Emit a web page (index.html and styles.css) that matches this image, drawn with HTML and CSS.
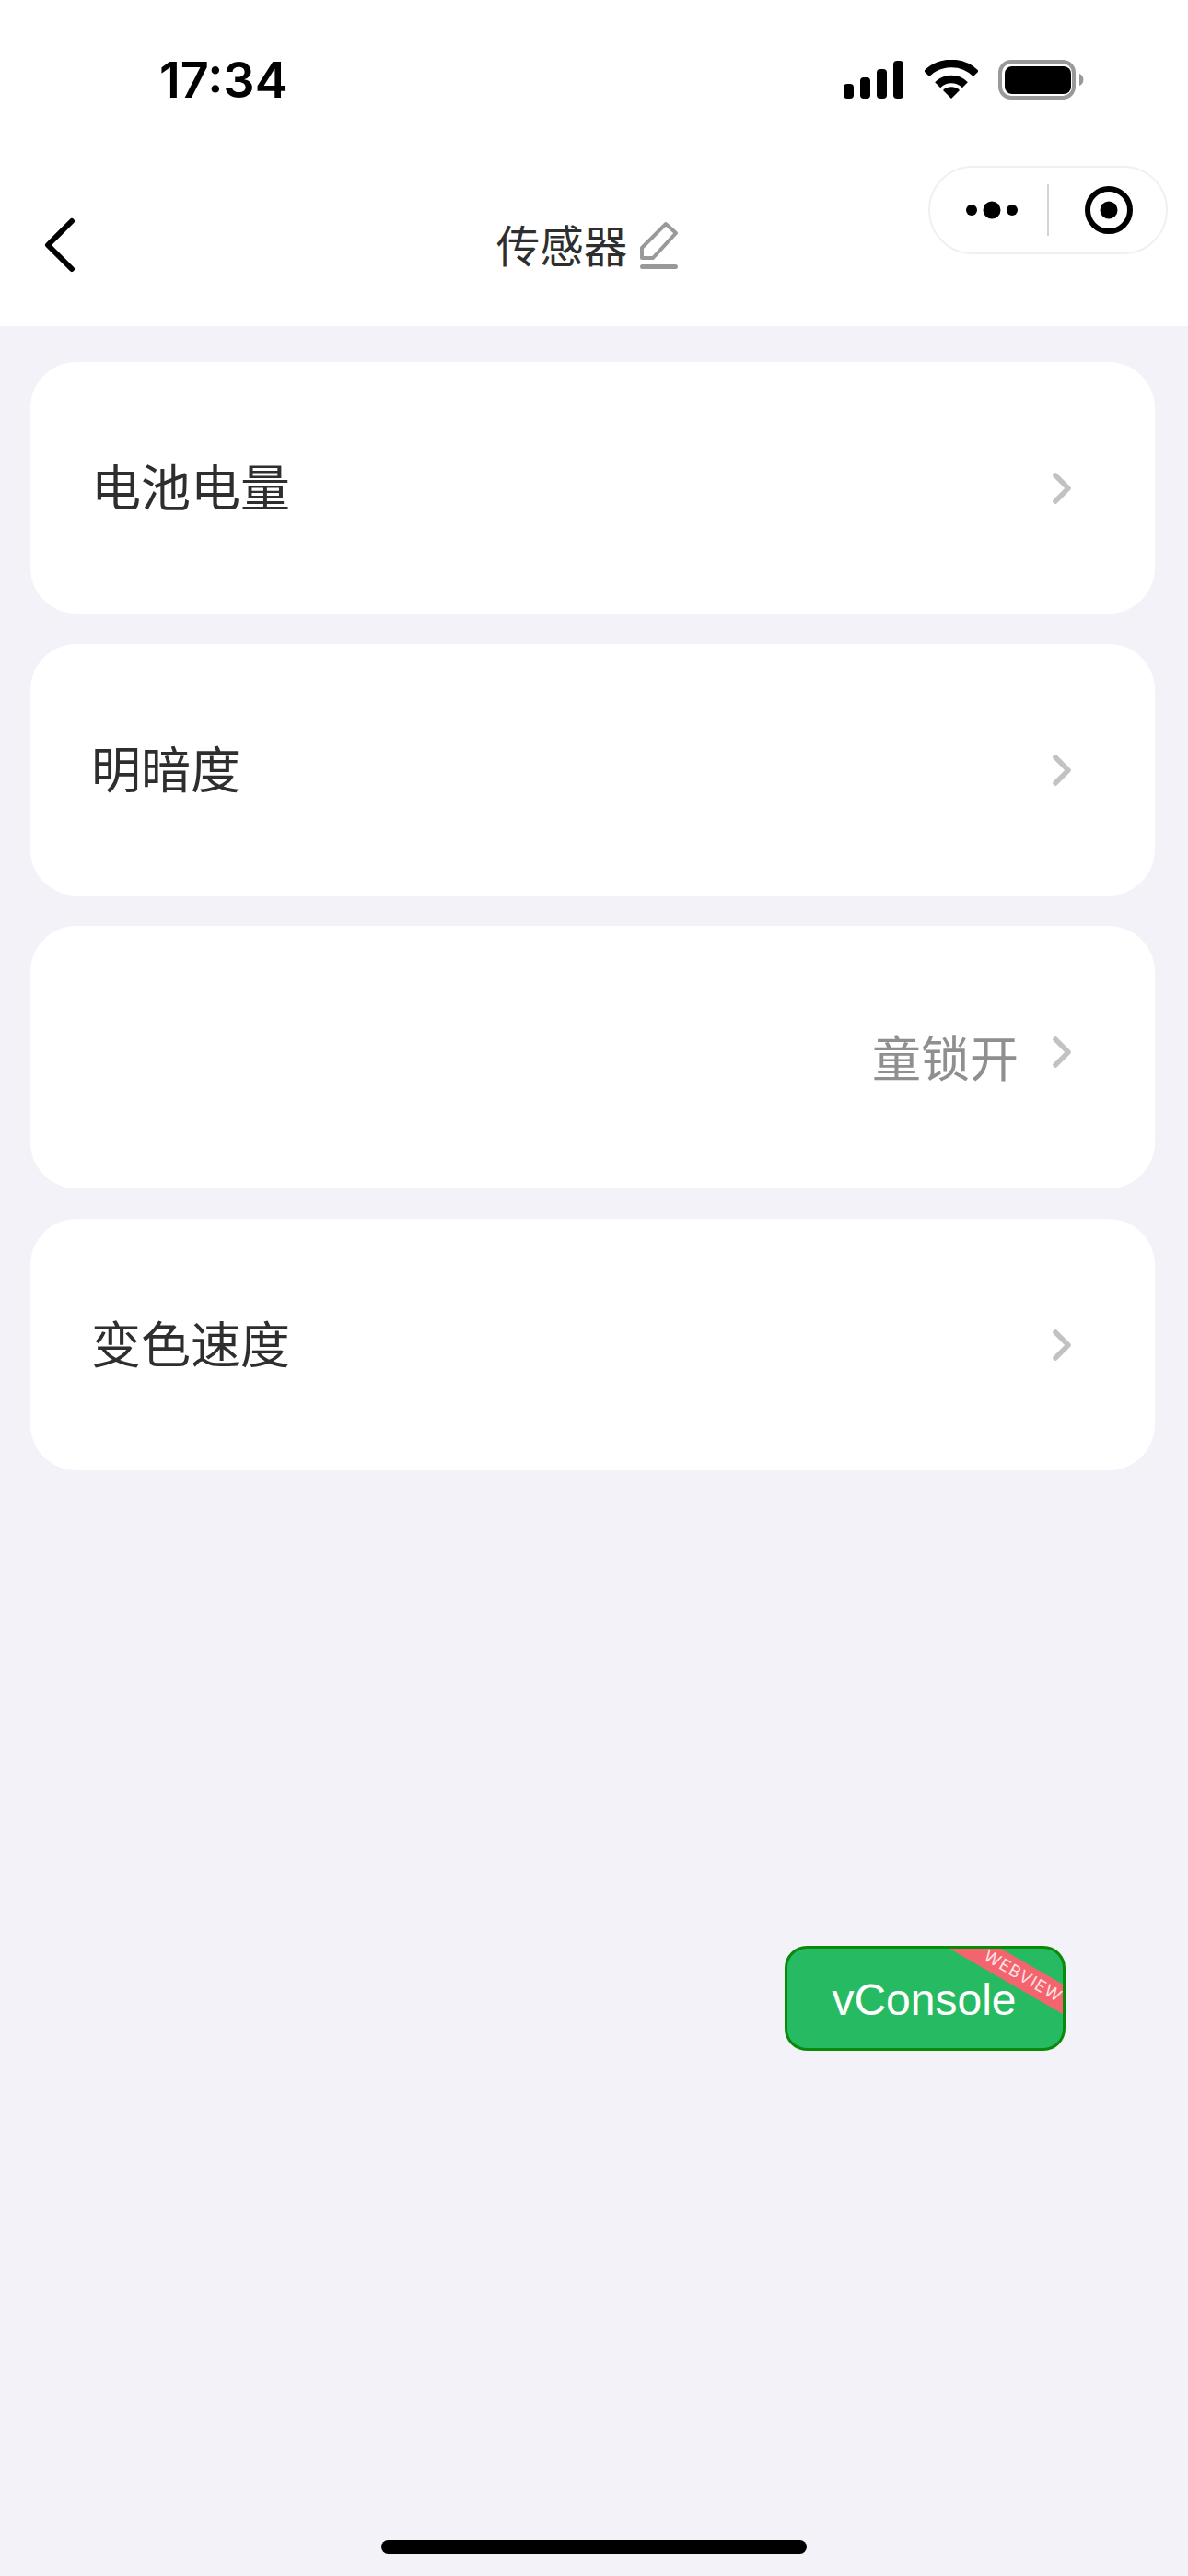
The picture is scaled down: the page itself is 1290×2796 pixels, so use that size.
FILE: index.html
```html
<!DOCTYPE html>
<html lang="zh-CN">
<head>
    <meta charset="UTF-8">
    <meta name="viewport" content="width=device-width, initial-scale=1.0">
    <title>传感器</title>
    <link rel="stylesheet" href="styles.css">
</head>
<body>
    <div class="top-bar">
        <div class="status-bar">
            <span class="status-time">17:34</span>
            <div class="status-icons">
                <svg class="icon-signal" width="65" height="41" viewBox="0 0 65 41">
                    <rect x="0" y="25" width="11" height="16" rx="4"/>
                    <rect x="18" y="18" width="11" height="23" rx="4"/>
                    <rect x="36" y="9" width="11" height="32" rx="4"/>
                    <rect x="54" y="0" width="11" height="41" rx="4"/>
                </svg>
                <svg class="icon-wifi" width="58" height="42" viewBox="0 0 58 42">
                    <path d="M2.1 15.1A38 38 0 0 1 55.9 15.1" fill="none" stroke="#000" stroke-width="8.5"/>
                    <path d="M14.15 27.15A21 21 0 0 1 43.85 27.15" fill="none" stroke="#000" stroke-width="8.5"/>
                    <path d="M29 42L20 33A12.7 12.7 0 0 1 38 33Z"/>
                </svg>
                <svg class="icon-battery" width="93" height="43" viewBox="0 0 93 43">
                    <rect x="2" y="2" width="80" height="39" rx="12" fill="none" stroke="#999" stroke-width="4"/>
                    <rect x="7" y="7" width="72" height="30" rx="8"/>
                    <path d="M88 15A7 7 0 0 1 88 28Z" fill="#999"/>
                </svg>
            </div>
        </div>
        <div class="nav-bar">
            <svg class="nav-back" width="36" height="62" viewBox="0 0 36 62">
                <path d="M30 5L4 31L30 57" fill="none" stroke="#000" stroke-width="6" stroke-linecap="round" stroke-linejoin="round"/>
            </svg>
            <div class="nav-title">
                <span class="nav-title-text">传感器</span>
                <svg class="nav-edit" width="44" height="52" viewBox="0 0 44 52">
                    <path d="M3 29L29 3L40 13L15 40H3Z" fill="none" stroke="#999" stroke-width="4" stroke-linejoin="round"/>
                    <rect x="1" y="47" width="41" height="5" rx="2.5" fill="#999"/>
                </svg>
            </div>
        </div>
        <div class="capsule">
            <svg class="capsule-more" width="60" height="20" viewBox="0 0 60 20">
                <circle cx="6" cy="10" r="6"/>
                <circle cx="28" cy="10" r="9.5"/>
                <circle cx="50" cy="10" r="6"/>
            </svg>
            <div class="capsule-line"></div>
            <svg class="capsule-close" width="52" height="52" viewBox="0 0 52 52">
                <circle cx="26" cy="26" r="23" fill="none" stroke="#000" stroke-width="6"/>
                <circle cx="26" cy="26" r="9.5"/>
            </svg>
        </div>
    </div>

    <div class="list">
        <div class="list-item">
            <span class="item-name">电池电量</span>
            <svg class="item-arrow" width="20" height="34" viewBox="0 0 20 34">
                <path d="M3 3L17 17L3 31" fill="none" stroke="#c2c2c2" stroke-width="5.5" stroke-linecap="round" stroke-linejoin="round"/>
            </svg>
        </div>
        <div class="list-item">
            <span class="item-name">明暗度</span>
            <svg class="item-arrow" width="20" height="34" viewBox="0 0 20 34">
                <path d="M3 3L17 17L3 31" fill="none" stroke="#c2c2c2" stroke-width="5.5" stroke-linecap="round" stroke-linejoin="round"/>
            </svg>
        </div>
        <div class="list-item list-item-tall">
            <span class="item-name"></span>
            <div class="item-right">
                <span class="item-value">童锁开</span>
                <svg class="item-arrow item-arrow-raised" width="20" height="34" viewBox="0 0 20 34">
                    <path d="M3 3L17 17L3 31" fill="none" stroke="#c2c2c2" stroke-width="5.5" stroke-linecap="round" stroke-linejoin="round"/>
                </svg>
            </div>
        </div>
        <div class="list-item">
            <span class="item-name">变色速度</span>
            <svg class="item-arrow" width="20" height="34" viewBox="0 0 20 34">
                <path d="M3 3L17 17L3 31" fill="none" stroke="#c2c2c2" stroke-width="5.5" stroke-linecap="round" stroke-linejoin="round"/>
            </svg>
        </div>
    </div>

    <div class="vconsole">
        <span class="vconsole-ribbon">WEBVIEW</span>
        <span class="vconsole-label">vConsole</span>
    </div>

    <div class="home-bar"></div>
</body>
</html>
```

FILE: styles.css
```css
* {
    margin: 0;
    padding: 0;
    box-sizing: border-box;
}

html,
body {
    height: 2796px;
}

body {
    position: relative;
    display: flex;
    flex-direction: column;
    overflow: hidden;
    background: #f2f2f8;
    font-family: 'Noto Sans CJK SC', 'Noto Sans', sans-serif;
    color: #2e2e2e;
}

.top-bar {
    height: 354px;
    background: #fff;
}

.status-bar {
    display: flex;
    justify-content: space-between;
    align-items: flex-start;
    height: 160px;
    padding: 65px 113px 0 173px;
}

.status-time {
    font-family: 'Inter', sans-serif;
    font-size: 54px;
    font-weight: 600;
    line-height: 44px;
    color: #000;
}

.status-icons {
    display: flex;
    align-items: flex-start;
    gap: 22px;
}

.icon-signal {
    margin-top: 1px;
    margin-right: 1px;
}

.nav-bar {
    display: flex;
    align-items: center;
    height: 194px;
    padding: 18px 61px 0 48px;
}

.nav-back {
    flex: none;
}

.nav-title {
    display: flex;
    align-items: center;
    gap: 13px;
    margin: 0 auto;
    padding-right: 36px;
    font-size: 47.5px;
}

.nav-title-text {
    margin-bottom: 4px;
}

.capsule {
    position: absolute;
    top: 180px;
    left: 1008px;
    display: flex;
    align-items: center;
    width: 260px;
    height: 96px;
    padding-left: 39px;
    background: #fff;
    border: 2px solid #f0f0f0;
    border-radius: 48px;
}

.capsule-line {
    width: 2px;
    height: 56px;
    margin-left: 28px;
    background: #d4d4d4;
}

.capsule-close {
    margin-left: 39px;
}

.list {
    display: flex;
    flex-direction: column;
    gap: 33px;
    padding: 39px 36px 0 33px;
}

.list-item {
    display: flex;
    justify-content: space-between;
    align-items: center;
    height: 273px;
    padding: 0 91px 0 66px;
    background: #fff;
    border-radius: 50px;
}

.list-item-tall {
    height: 285px;
}

.item-name {
    margin-bottom: 7px;
    font-size: 54px;
}

.item-right {
    display: flex;
    align-items: center;
    gap: 37px;
}

.item-value {
    margin-bottom: 3px;
    font-size: 53px;
    color: #8f8f8f;
}

.item-arrow {
    flex: none;
}

.item-arrow-raised {
    margin-bottom: 12px;
}

.vconsole {
    position: absolute;
    top: 2112px;
    left: 852px;
    display: flex;
    justify-content: center;
    align-items: center;
    width: 305px;
    height: 114px;
    overflow: hidden;
    background: #26bb62;
    border: 3px solid #0a8a0a;
    border-radius: 24px;
}

.vconsole-label {
    margin: 2px 2px 0 0;
    font-family: 'Liberation Sans', sans-serif;
    font-size: 48px;
    color: #fff;
}

.vconsole-ribbon {
    position: absolute;
    top: 16px;
    left: 156px;
    width: 200px;
    height: 28px;
    background: #f4646f;
    font-family: 'Inter', sans-serif;
    font-size: 18px;
    letter-spacing: 1.2px;
    line-height: 28px;
    text-align: center;
    color: #ffe4e6;
    transform: rotate(30deg);
}

.home-bar {
    width: 462px;
    height: 15px;
    margin: auto 0 24px 414px;
    background: #000;
    border-radius: 8px;
}
```
